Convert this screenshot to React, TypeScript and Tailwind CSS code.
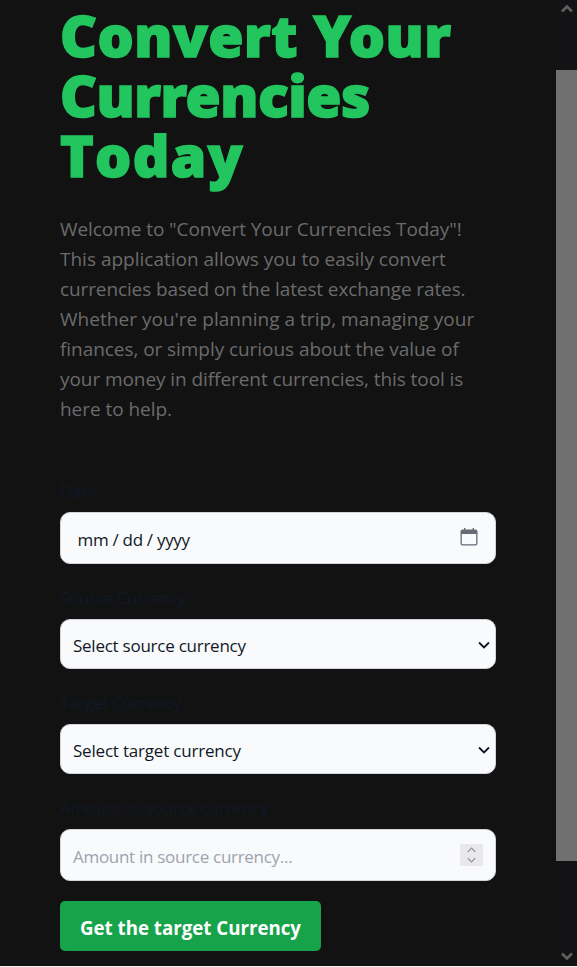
import React from "react";

const intro = [
  { text: 'Welcome to "Convert Your Currencies Today"!', cls: "tracking-[-0.07px]" },
  { text: "This application allows you to easily convert", cls: "tracking-[0px]" },
  { text: "currencies based on the latest exchange rates.", cls: "tracking-[-0.11px]" },
  { text: "Whether you're planning a trip, managing your", cls: "tracking-[0.03px]" },
  { text: "finances, or simply curious about the value of", cls: "tracking-[-0.06px]" },
  { text: "your money in different currencies, this tool is", cls: "tracking-[-0.07px]" },
  { text: "here to help.", cls: "tracking-[-0.05px]" },
];

function Chevron({ className, up = false, width = 1.8 }: { className: string; up?: boolean; width?: number }) {
  return (
    <svg viewBox="0 0 12 8" className={className} fill="none" stroke="currentColor" strokeWidth={width}>
      <path d={up ? "M1 6.5 6 1.5 11 6.5" : "M1 1.5 6 6.5 11 1.5"} />
    </svg>
  );
}

function Label({ children, className }: { children: React.ReactNode; className: string }) {
  return <div className={`h-[25px] leading-[25px] text-[17px] whitespace-nowrap text-[#111827] ${className}`}>{children}</div>;
}

const field = "flex w-[436px] items-center rounded-[10px] border border-[#d1d5db] bg-[#f9fafb] text-[17px] whitespace-nowrap text-[#111827]";

export default function App() {
  return (
    <div className="flex h-[967px] w-[577px] overflow-hidden border-b border-[#f4f4f4] bg-[#121212] font-['Open_Sans','Noto_Sans',sans-serif]">
      <main className="w-[556px] pl-[60px] pt-[5px]">
        <h1 className="font-['Noto_Sans','Open_Sans',sans-serif] text-[57px] leading-[60px] font-black whitespace-nowrap text-[#22c55e] [-webkit-text-stroke:1.6px_#22c55e]">
          <span className="block tracking-[0.5px]">Convert Your</span>
          <span className="block tracking-[-0.5px]">Currencies</span>
          <span className="block tracking-[1.4px] [font-kerning:none]">Today</span>
        </h1>
        <p className="mt-[29px] text-[19px] leading-[30px] whitespace-nowrap text-[#6b6b6b]">
          {intro.map((l) => (
            <span key={l.text} className="block">
              <span className={l.cls}>{l.text}</span>
            </span>
          ))}
        </p>
        <form className="mt-[54px]">
          <Label className="tracking-[-0.1px]">Date</Label>
          <div className={`${field} mt-[9px] h-[52px] justify-between pr-[17.500px] pl-[16.500px]`}>
            <span className="pt-[4px] tracking-[-0.3px]">mm / dd / yyyy</span>
            <svg viewBox="0 0 18 18" className="mb-[2px] h-[18px] w-[18px] text-[#666a75]" fill="currentColor">
              <path
                fillRule="evenodd"
                d="M4 0h1.4v1.5h7.2V0H14v1.5h1.5A2 2 0 0 1 17.500 3.500v12a2 2 0 0 1-2 2h-13a2 2 0 0 1-2-2v-12a2 2 0 0 1 2-2H4zM1.800 6v9.500a.8.8 0 0 0 .8.8h12.800a.8.8 0 0 0 .8-.8V6z"
              />
            </svg>
          </div>
          <Label className="mt-[21px] tracking-[-0.33px]">Source Currency</Label>
          <div className={`${field} mt-[9px] h-[50px] justify-between pr-[5.500px] pl-[12px]`}>
            <span className="pt-[4px] tracking-[-0.25px]">Select source currency</span>
            <Chevron className="mt-[2px] h-[8px] w-[12px]" />
          </div>
          <Label className="mt-[21px] tracking-[-0.37px]">Target Currency</Label>
          <div className={`${field} mt-[9px] h-[50px] justify-between pr-[5.500px] pl-[12px]`}>
            <span className="pt-[4px] tracking-[-0.2px]">Select target currency</span>
            <Chevron className="mt-[2px] h-[8px] w-[12px]" />
          </div>
          <Label className="mt-[21px] tracking-[-0.25px]">Amount in source currency</Label>
          <div className={`${field} mt-[9px] h-[52px] justify-between pr-[12px] pl-[12px]`}>
            <span className="pt-[3px] tracking-[-0.29px] text-[#9ca3af]">Amount in source currency...</span>
            <span className="flex h-[22px] w-[23px] flex-col items-center justify-center gap-[4px] bg-[#e9e9ed] text-[#92929e]">
              <Chevron up className="h-[6px] w-[9px]" />
              <Chevron className="h-[6px] w-[9px]" />
            </span>
          </div>
          <button type="button" className="mt-[20px] flex h-[50px] w-[261px] items-center rounded-[5px] bg-[#16a34a] pt-[4px] pl-[20px] text-[18.700px] font-bold whitespace-nowrap text-white">
            Get the target Currency
          </button>
        </form>
      </main>
      <aside className="flex w-[21px] flex-col bg-[#131315] text-[#5f5f60]">
        <div className="flex h-[70px] justify-center pt-[5px]">
          <Chevron up width={2.6} className="h-[8px] w-[12px]" />
        </div>
        <div className="h-[791px] bg-[#707070]" />
        <div className="flex flex-1 items-end justify-center pb-[6px]">
          <Chevron width={2.6} className="h-[8px] w-[12px]" />
        </div>
      </aside>
    </div>
  );
}
